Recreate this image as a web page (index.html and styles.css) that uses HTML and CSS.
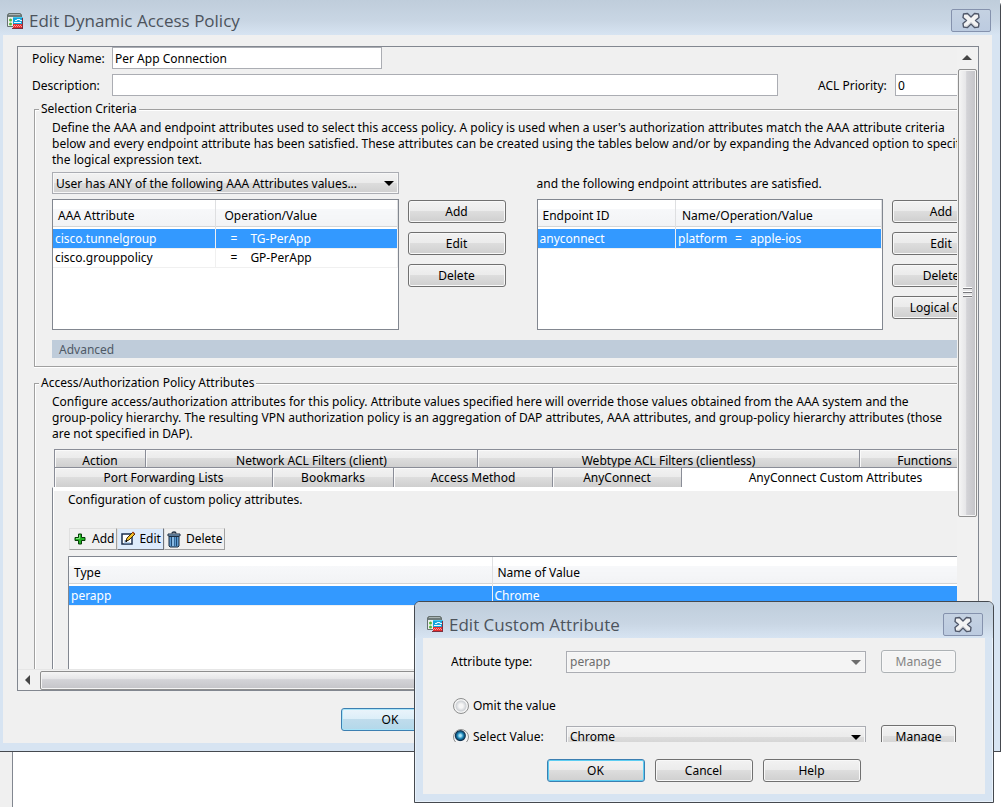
FILE: index.html
```html
<!DOCTYPE html>
<html lang="en">
<head>
<meta charset="utf-8">
<meta name="viewport" content="width=device-width, initial-scale=1">
<title>Edit Dynamic Access Policy</title>
<link rel="stylesheet" href="styles.css">
</head>
<body>
<svg class="sprites" aria-hidden="true">
  <symbol id="app" viewBox="0 0 16 16">
    <path d="M.5 1.500l1-1h12l1 1v12H.5z" fill="#eef0ee" stroke="#65706f"/>
    <path d="M1 1h13v3H1z" fill="#6f7b7b"/>
    <path d="M2 1.500h11" stroke="#aab4b4"/>
    <circle cx="3.500" cy="7" r="1.500" fill="#55b83c"/><circle cx="3.500" cy="11" r="1.500" fill="#55b83c"/>
    <path d="M6 4h10v7H6z" fill="#13a5dc"/>
    <path d="M6 4h10v1H6z" fill="#43c8ee"/>
    <path d="M8 7.500h2v-1h3v1h2M7 9.500h7" fill="none" stroke="#e8faff"/>
    <path d="M6 11h10v4H6z" fill="#e52e2e"/>
    <path d="M7 12.500h9M6 13.500h10" stroke="#ff9696" stroke-dasharray="1 1"/>
    <path d="M5 15.500h11M15.500 5v10" stroke="#7b3040"/>
  </symbol>
  <symbol id="close" viewBox="0 0 20 17">
    <path d="M2.500 2l4-.5L10 5l3.500-3.500 4 .5.5 3.500L14.500 8.500l3.500 3-.5 3.500-4 .5L10 12l-3.500 3.500-4-.5L2 11.500l3.500-3L2 5.500z" fill="#f3f3f3" stroke="#50586a" stroke-width="1.400" stroke-linejoin="round"/>
    <path d="M4 14h2l4-4 4 4h2" fill="none" stroke="#d8dade"/>
  </symbol>
  <symbol id="plus" viewBox="0 0 12 12">
    <path d="M4.500 1h3v3.500H11v3H7.500V11h-3V7.500H1v-3h3.500z" fill="#24b324" stroke="#063f06"/>
    <path d="M5.500 2v3.500H2" fill="none" stroke="#7ee87e"/>
  </symbol>
  <symbol id="pencil" viewBox="0 0 16 16">
    <path d="M2 3h10v10H2z" fill="#fff" stroke="#1c2f4c" stroke-width="1.500"/>
    <path d="M4 10h3M4 12h6" stroke="#7fa8d8"/>
    <path d="M6 10l1-3 6-6 2 2-6 6z" fill="#f4c22c" stroke="#3c2a08"/>
    <path d="M12.500 1l2 2" stroke="#b24a20" stroke-width="1.500"/>
    <path d="M5.500 10.500l1.500-.5" stroke="#000" stroke-width="1.500"/>
  </symbol>
  <symbol id="trash" viewBox="0 0 14 17">
    <path d="M5 2.500C5 .5 9 .5 9 2.500" fill="none" stroke="#1d2d40" stroke-width="1.300"/>
    <path d="M1 3h12v2H1z" fill="#9cc3e6" stroke="#1d2d40"/>
    <path d="M2 5.500h10V15l-1 1H3l-1-1z" fill="#5e9bd0" stroke="#1d2d40"/>
    <path d="M4.500 6v9M9.500 6v9" stroke="#1f4a75"/>
    <path d="M6 6v9" stroke="#b8d8f2"/>
    <path d="M7.500 6v9" stroke="#346a9c"/>
  </symbol>
</svg>

<main class="desktop">
  <section class="window window-policy" aria-labelledby="policy-title">
    <header class="titlebar">
      <svg class="app-icon"><use href="#app"/></svg>
      <h1 class="title" id="policy-title">Edit Dynamic Access Policy</h1>
      <button class="close" type="button" aria-label="Close"><svg><use href="#close"/></svg></button>
    </header>
    <div class="client">
      <div class="scroller">
        <div class="viewport">
          <div class="sheet">
            <div class="form-row">
              <label class="form-label" for="name">Policy Name:</label>
              <input class="field field-name" id="name" type="text" value="Per App Connection">
            </div>
            <div class="form-row">
              <label class="form-label" for="description">Description:</label>
              <input class="field field-description" id="description" type="text">
              <label class="form-label priority-label" for="priority">ACL Priority:</label>
              <input class="field field-priority" id="priority" type="text" value="0">
            </div>

            <fieldset class="group">
              <legend>Selection Criteria</legend>
              <p class="copy">Define the AAA and endpoint attributes used to select this access policy. A policy is used when a user's authorization attributes match the AAA attribute criteria<br>below and every endpoint attribute has been satisfied. These attributes can be created using the tables below and/or by expanding the Advanced option to specify<br>the logical expression text.</p>
              <div class="criteria">
                <div class="criterion">
                  <span class="combo">
                    <select aria-label="AAA attribute match"><option>User has ANY of the following AAA Attributes values...</option></select>
                  </span>
                  <span></span>
                  <div class="list">
                    <table class="grid grid-aaa">
                      <thead><tr><th>AAA Attribute</th><th>Operation/Value</th></tr></thead>
                      <tbody>
                        <tr class="selected"><td>cisco.tunnelgroup</td><td><span class="op">=</span>TG-PerApp</td></tr>
                        <tr><td>cisco.grouppolicy</td><td><span class="op">=</span>GP-PerApp</td></tr>
                      </tbody>
                    </table>
                  </div>
                  <div class="actions">
                    <button class="button" type="button">Add</button>
                    <button class="button" type="button">Edit</button>
                    <button class="button" type="button">Delete</button>
                  </div>
                </div>
                <div class="criterion">
                  <span class="caption">and the following endpoint attributes are satisfied.</span>
                  <span></span>
                  <div class="list">
                    <table class="grid grid-endpoint">
                      <thead><tr><th>Endpoint ID</th><th>Name/Operation/Value</th></tr></thead>
                      <tbody>
                        <tr class="selected"><td>anyconnect</td><td>platform<span class="op">=</span>apple-ios</td></tr>
                      </tbody>
                    </table>
                  </div>
                  <div class="actions">
                    <button class="button" type="button">Add</button>
                    <button class="button" type="button">Edit</button>
                    <button class="button" type="button">Delete</button>
                    <button class="button" type="button">Logical Op.</button>
                  </div>
                </div>
              </div>
              <button class="advanced" type="button">Advanced</button>
            </fieldset>

            <fieldset class="group group-attributes">
              <legend>Access/Authorization Policy Attributes</legend>
              <p class="copy">Configure access/authorization attributes for this policy. Attribute values specified here will override those values obtained from the AAA system and the<br>group-policy hierarchy. The resulting VPN authorization policy is an aggregation of DAP attributes, AAA attributes, and group-policy hierarchy attributes (those<br>are not specified in DAP).</p>
              <div class="tabs" role="tablist">
                <div class="tab-row tab-row-back">
                  <button class="tab" type="button" role="tab">Action</button>
                  <button class="tab" type="button" role="tab">Network ACL Filters (client)</button>
                  <button class="tab" type="button" role="tab">Webtype ACL Filters (clientless)</button>
                  <button class="tab" type="button" role="tab">Functions</button>
                </div>
                <div class="tab-row tab-row-front">
                  <button class="tab" type="button" role="tab">Port Forwarding Lists</button>
                  <button class="tab" type="button" role="tab">Bookmarks</button>
                  <button class="tab" type="button" role="tab">Access Method</button>
                  <button class="tab" type="button" role="tab">AnyConnect</button>
                  <button class="tab tab-active" type="button" role="tab" aria-selected="true">AnyConnect Custom Attributes</button>
                </div>
              </div>
              <div class="panel" role="tabpanel">
                <p class="panel-copy">Configuration of custom policy attributes.</p>
                <div class="toolbar">
                  <button class="tool" type="button"><svg class="icon-plus"><use href="#plus"/></svg>Add</button>
                  <button class="tool tool-hot" type="button"><svg class="icon-pencil"><use href="#pencil"/></svg>Edit</button>
                  <button class="tool" type="button"><svg class="icon-trash"><use href="#trash"/></svg>Delete</button>
                </div>
                <div class="list list-custom">
                  <table class="grid grid-custom">
                    <thead><tr><th>Type</th><th>Name of Value</th></tr></thead>
                    <tbody><tr class="selected"><td>perapp</td><td>Chrome</td></tr></tbody>
                  </table>
                </div>
              </div>
            </fieldset>
          </div>
        </div>
        <div class="track track-y" aria-hidden="true">
          <span class="arrow arrow-up"></span>
          <span class="thumb thumb-y"><i class="grip"></i></span>
        </div>
        <div class="track track-x" aria-hidden="true">
          <span class="arrow arrow-left"></span>
          <span class="thumb thumb-x"></span>
        </div>
      </div>
      <footer class="buttons">
        <button class="button button-hot" type="button">OK</button>
        <span class="button-space"></span>
        <span class="button-space"></span>
      </footer>
    </div>
  </section>
  <div class="behind"></div>

  <section class="window window-attribute" role="dialog" aria-labelledby="attribute-title">
    <header class="titlebar">
      <svg class="app-icon"><use href="#app"/></svg>
      <h2 class="title" id="attribute-title">Edit Custom Attribute</h2>
      <button class="close" type="button" aria-label="Close"><svg><use href="#close"/></svg></button>
    </header>
    <div class="client">
      <div class="options">
        <label for="type">Attribute type:</label>
        <span class="combo combo-disabled"><select id="type" disabled><option>perapp</option></select></span>
        <button class="button" type="button" disabled>Manage</button>
        <label class="choice choice-omit"><input type="radio" name="value-mode">Omit the value</label>
        <label class="choice"><input type="radio" name="value-mode" checked>Select Value:</label>
        <span class="combo"><select aria-label="Value"><option>Chrome</option></select></span>
        <button class="button" type="button">Manage</button>
      </div>
      <footer class="buttons">
        <button class="button button-default" type="button">OK</button>
        <button class="button" type="button">Cancel</button>
        <button class="button" type="button">Help</button>
      </footer>
    </div>
  </section>
</main>
</body>
</html>
```
FILE: styles.css
```css
* { box-sizing: border-box; }

:root {
  --frame: #d7e4f2;
  --face: #f0f0f0;
  --line: #828790;
  --select: #3399ff;
  --silver: linear-gradient(#f2f2f2 0, #ebebeb 48%, #dddddd 50%, #cfcfcf 100%);
}

body {
  margin: 0;
  color: #000;
  font: 12px/16px "Noto Sans", "DejaVu Sans Condensed", sans-serif;
}

button, input, select { font: inherit; color: inherit; margin: 0; }
button { padding: 0; }
h1, h2, p { margin: 0; font-weight: normal; }
.sprites { display: none; }

.desktop {
  position: relative;
  display: flex;
  flex-direction: column;
  height: 100vh;
  overflow: hidden;
  background: #fff;
}

.behind {
  flex: none;
  width: 13px;
  height: 55px;
  background: var(--face);
  border-right: 1px solid var(--line);
}

/* Windows */
.window {
  display: flex;
  flex-direction: column;
  background: var(--frame);
  border: 1px solid #45494f;
}

.window-policy {
  flex: 1;
  min-height: 0;
  margin-right: 1px;
  padding: 0 8px 8px 3px;
  border-width: 0 1px 1px 0;
  border-radius: 0 6px 0 0;
}

.titlebar {
  display: flex;
  align-items: center;
  flex: none;
  height: 35px;
  margin: 0 -8px 0 -3px;
  padding: 6px 9px 0 7px;
  background: linear-gradient(#bfcddb, #c9d6e4 60%, #d7e4f2);
}

.app-icon { width: 16px; height: 16px; margin-right: 6px; }

.title {
  flex: 1;
  padding-top: 1px;
  color: #4c535c;
  font: 17px/26px "Open Sans", "Noto Sans", sans-serif;
}

.close {
  display: grid;
  place-items: center;
  width: 40px;
  height: 23px;
  background: linear-gradient(#c5d2e2, #bccbe0);
  border: 1px solid #8592ad;
  border-radius: 2px;
}
.close svg { width: 20px; height: 17px; }

.client {
  display: flex;
  flex: 1;
  flex-direction: column;
  min-height: 0;
  background: var(--face);
}

.window-policy > .client { padding: 11px 13px 0 14px; }

/* Scrolling area */
.scroller {
  display: grid;
  flex: 1;
  grid-template: minmax(0, 1fr) 21px / minmax(0, 1fr) 21px;
  min-height: 0;
  border: 1px solid var(--line);
}

.viewport { overflow: hidden; }
.sheet { width: 1000px; padding: 0 16px; }

.track { display: flex; align-items: center; background: #f1f1f1; }
.track-y { flex-direction: column; padding-right: 1px; }
.track-x { grid-column: 1 / -1; border-top: 1px solid #e6e6e6; }

.arrow { flex: none; border: 5px solid transparent; }
.arrow-up { margin: 8px 0 9px; border-top-width: 0; border-bottom-color: #444; }
.arrow-left { margin: 0 10px 0 7px; border-left-width: 0; border-right-color: #444; }

.thumb { border: 1px solid #8e8e8e; border-radius: 2px; box-shadow: inset 0 0 0 1px #f4f4f4; }
.thumb-y {
  display: grid;
  place-items: center;
  width: 19px;
  height: 72%;
  background: linear-gradient(90deg, #f5f5f5, #e6e6e8 40%, #d3d3d7 45%, #c4c4c8);
}
.thumb-x {
  flex: 1;
  height: 19px;
  margin-right: 40px;
  background: linear-gradient(#f5f5f5, #e6e6e8 40%, #d3d3d7 45%, #c4c4c8);
}
.grip { width: 9px; height: 11px; background: repeating-linear-gradient(#fff 0 1px, #77777b 1px 2px, #e4e4e6 2px 4px); }

/* Form controls */
.form-row { display: flex; align-items: center; height: 22px; margin: 0 0 5px -2px; }
.form-label { width: 80px; padding-top: 2px; }
.field {
  height: 22px;
  min-width: 0;
  padding: 0 2px;
  background: #fff;
  border: 1px solid #abadb3;
  border-radius: 0;
}
.field-name { width: 270px; }
.field-description { width: 666px; }
.field-priority { flex: 1; }
.priority-label { width: 117px; padding-left: 40px; }

.combo { position: relative; display: block; }
.combo select {
  display: block;
  width: 100%;
  height: 22px;
  padding: 1px 24px 0 3px;
  appearance: none;
  background: var(--silver);
  border: 1px solid #abadb3;
  border-radius: 0;
  box-shadow: inset 0 0 0 1px #f7f7f7;
  opacity: 1;
}
.combo::after {
  content: "";
  position: absolute;
  top: 9px;
  right: 5px;
  border: 5px solid transparent;
  border-top-color: #000;
  border-bottom-width: 0;
}
.combo-disabled select { color: #6d6d6d; background: #f4f4f4; }
.combo-disabled::after { border-top-color: #6d6d6d; }

.button {
  width: 98px;
  height: 23px;
  background: var(--silver);
  border: 1px solid #707070;
  border-radius: 3px;
  box-shadow: inset 0 0 0 1px #f8f8f8;
}
.button:disabled { color: #838383; background: #f4f4f4; border-color: #adb2b5; }
.button-hot { background: linear-gradient(#eaf4fb, #dceef8 48%, #bfdcec 50%, #b3d8ea); border-color: #3c7fb1; box-shadow: inset 0 0 0 1px #a8e4f8; }
.button-default { border-color: #3c7fb1; box-shadow: inset 0 0 0 1px #5ccdf2; }
.button-space { width: 98px; }
.buttons { display: flex; justify-content: center; gap: 10px; }
.window-policy .buttons { flex: none; padding: 17px 0 12px; }

/* Groups */
.group {
  min-width: 0;
  margin: 0 0 8px;
  padding: 3px 11px 8px 17px;
  border: 1px solid #a0a0a0;
  box-shadow: inset 1px 1px #fff, 0 1px #fff;
}
.group legend { margin-left: -13px; padding: 0 2px; background: var(--face); }
.copy { white-space: nowrap; }

.criteria { display: grid; grid-template-columns: 1fr 1fr; gap: 31px; margin: 4px 0 10px; }
.criterion { display: grid; grid-template-columns: minmax(0, 1fr) 98px; gap: 5px 9px; }
.caption { height: 22px; line-height: 24px; }
.actions { display: flex; flex-direction: column; gap: 9px; padding-top: 1px; }

.advanced {
  display: block;
  width: 100%;
  height: 18px;
  padding: 2px 7px 0;
  color: #4f5a66;
  text-align: left;
  background: #bfccda;
  border: 0;
}

/* Lists */
.list { height: 131px; background: #fff; border: 1px solid var(--line); }
.grid { width: 100%; border-collapse: collapse; table-layout: fixed; }
.grid th {
  height: 29px;
  padding: 2px 5px 0;
  font-weight: normal;
  text-align: left;
  background: linear-gradient(#fff 9px, #f7f8fa 9px, #f2f3f5 26px, #d5d5d5 26px 27px, #fff 27px);
  border-right: 1px solid #dedfe1;
}
.grid th + th { padding-left: 9px; }
.grid td {
  height: 19px;
  padding: 1px 2px 0;
  border-right: 1px solid #f0f0f0;
  border-bottom: 1px solid #f0f0f0;
}
.grid .selected { color: #fff; background: var(--select); }
.grid-aaa th:first-child { width: 162px; }
.grid-aaa .op { margin: 0 13px; }
.grid-endpoint th:first-child { width: 138px; }
.grid-endpoint th + th { padding-left: 6px; }
.grid-endpoint td + td { padding-left: 2px; }
.grid-endpoint .op { margin: 0 8px; }
.grid-custom th:first-child { width: 423px; }
.grid-custom th + th { padding-left: 5px; }

/* Tabs */
.tabs { margin: 7px 0 0 2px; }
.tab-row { display: grid; }
.tab-row-back { grid-template-columns: 92px 332px 382px 1fr; height: 18px; }
.tab-row-front { grid-template-columns: 219px 121px 159px 129px 1fr; height: 20px; }
.tab {
  min-width: 0;
  padding: 3px 0 0;
  overflow: hidden;
  white-space: nowrap;
  background: var(--silver);
  border: 1px solid #8a8d97;
  border-width: 1px 1px 0 1px;
  box-shadow: inset 1px 1px #fafafa;
}
.tab + .tab { border-left-width: 0; }
.tab-row-back .tab { height: 18px; padding-top: 4px; line-height: 14px; }
.tab-row-front .tab { padding-top: 1px; }
.tab-row-front .tab-active { padding: 0; background: #fff; box-shadow: none; border-color: #fff; border-top-color: #8a8d97; }

.panel {
  padding: 4px 0 0 15px;
  background: linear-gradient(#fff 3px, transparent 3px);
  border: 1px solid var(--line);
  border-top-color: #fff;
  box-shadow: inset 1px 0 #fff;
}
.panel-copy { padding-bottom: 20px; }

.toolbar { display: flex; margin-left: 1px; }
.tool {
  display: flex;
  align-items: center;
  height: 22px;
  padding: 0 2px;
  background: var(--face);
  border: 1px solid #e0e0e0;
  border-right-color: #a0a0a0;
  border-bottom-color: #a0a0a0;
}
.tool-hot { background: #ddebfc; border-right-color: #70747c; border-bottom-color: #70747c; }
.icon-plus { width: 12px; height: 12px; margin: 0 6px 0 2px; }
.icon-pencil { width: 16px; height: 16px; margin-right: 3px; }
.icon-trash { width: 14px; height: 17px; margin-right: 5px; }
.list-custom { margin-top: 6px; height: 160px; }

/* Custom attribute dialog */
.window-attribute {
  position: absolute;
  right: 8px;
  bottom: 4px;
  width: 580px;
  padding: 0 8px 8px;
  border-radius: 6px 6px 0 0;
  box-shadow: inset 0 0 0 1px #e9f2fb;
}
.window-attribute .titlebar { height: 36px; margin: 0 -8px; padding: 8px 10px 0 12px; border-radius: 5px 5px 0 0; }
.window-attribute > .client { padding: 12px 29px 12px 28px; }
.options {
  display: grid;
  grid-template: 23px 52px 23px / 100px 1fr 75px;
  column-gap: 15px;
  align-items: center;
  align-content: start;
  height: 92px;
  overflow: hidden;
}
.options .button { width: 75px; }
.choice { display: flex; align-items: center; gap: 4px; padding-left: 2px; white-space: nowrap; }
.choice-omit { grid-column: 1 / -1; padding-top: 14px; }
.choice input {
  width: 16px;
  height: 16px;
  flex: none;
  appearance: none;
  background: radial-gradient(#f6f6f6 0 2px, #cfd2d6 5px, #f4f4f4 6px);
  border: 1px solid #8e8f8f;
  border-radius: 50%;
}
.choice input:checked { background: radial-gradient(circle at 45% 40%, #a8e4f8 0 1px, #1c86b8 3px, #0d2e4c 5px, #f4f4f4 6px); }
.window-attribute .buttons { margin-top: 17px; }
```
